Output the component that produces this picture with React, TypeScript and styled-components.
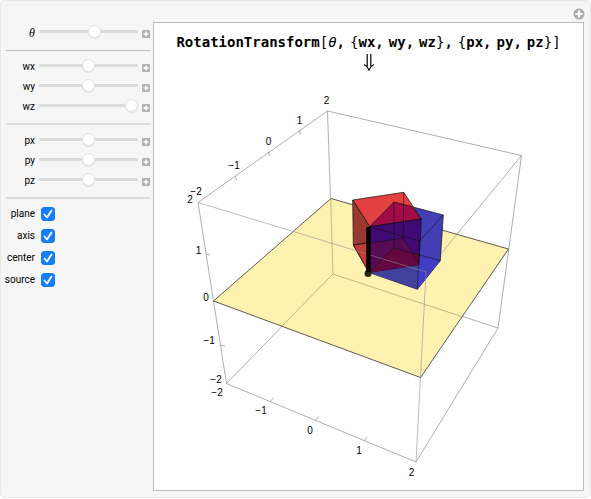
import React, { useState } from "react";
import styled, { createGlobalStyle } from "styled-components";

const GlobalStyle = createGlobalStyle`
  * { box-sizing: border-box; }
  body { margin: 0; background: #fff; }
`;

const Panel = styled.main`
  display: grid;
  grid-template-columns: 144px minmax(0, 1fr);
  column-gap: 3px;
  padding: 0 6px 6px 5px;
  border: 1px solid #e8e8e8;
  border-radius: 5px;
  background: #f6f6f6;
  color: #000;
  font: 400 10px/12px Roboto, sans-serif;
`;

const Header = styled.header`
  grid-column: 1 / -1;
  display: flex;
  justify-content: flex-end;
  height: 21px;
  padding-top: 7px;
`;

const MenuButton = styled.button`
  display: flex;
  width: 12px;
  height: 12px;
  margin-right: -1px;
  padding: 0;
  border: 0;
  background: none;
`;

const Controls = styled.form`
  display: flex;
  flex-direction: column;
  margin-top: -1px;
`;

const Group = styled.div`
  display: flex;
  flex-direction: column;
`;

const Divider = styled.hr<{ $soft?: boolean }>`
  width: 100%;
  height: ${(p) => (p.$soft ? 2 : 1)}px;
  margin: ${(p) => (p.$soft ? 8 : 9)}px 0 4px;
  border: 0;
  background: ${(p) => (p.$soft ? "#dcdcdc" : "#bcbcbc")};
`;

const SliderRow = styled.div`
  display: grid;
  grid-template-columns: 29px 99px 8px;
  column-gap: 4px;
  align-items: center;
  height: 20px;
`;

const Label = styled.label<{ $math?: boolean }>`
  padding-top: 4px;
  text-align: right;
  ${(p) => p.$math && 'font: italic 400 12px/12px "Liberation Serif", serif;'}
`;

const Slider = styled.input`
  appearance: none;
  width: 99px;
  height: 14px;
  margin: 0;
  background: none;
  &::-webkit-slider-runnable-track {
    height: 3px;
    border-radius: 2px;
    background: #dadada;
  }
  &::-webkit-slider-thumb {
    appearance: none;
    width: 13px;
    height: 13px;
    margin-top: -5px;
    border: 1px solid #e2e2e2;
    border-radius: 50%;
    background: #fff;
    box-shadow: 0 1px 1px rgba(0, 0, 0, 0.08);
  }
`;

const ExpandButton = styled.button`
  display: flex;
  width: 8px;
  height: 8px;
  margin-top: 5px;
  padding: 0;
  border: 0;
  background: none;
`;

const CheckRow = styled.div`
  display: grid;
  grid-template-columns: 29px 14px;
  column-gap: 6px;
  align-items: center;
  height: 22px;
`;

const CheckLabel = styled.label`
  display: flex;
  justify-content: flex-end;
`;

const CheckBox = styled.span`
  display: grid;
  > * { grid-area: 1 / 1; }
  svg { pointer-events: none; }
`;

const CheckInput = styled.input`
  appearance: none;
  width: 14px;
  height: 14px;
  margin: 0;
  border-radius: 3px;
  background: #fff;
  border: 1px solid #c4c4c4;
  &:checked { background: #147efb; border-color: #147efb; }
`;

const Display = styled.section`
  border: 1px solid #bdbdbd;
  background: #fff;
`;

const Title = styled.h1`
  display: flex;
  justify-content: center;
  gap: 5px;
  margin: 10px 0 0;
  font: 700 14px/18px "DejaVu Sans Mono", monospace;
  white-space: nowrap;
`;

const Light = styled.span`
  font-weight: 400;
`;

const Theta = styled.i`
  font-weight: 400;
`;

const ArrowRow = styled.div`
  display: flex;
  justify-content: center;
  height: 29px;
  padding-top: 2px;
`;

const Plot = styled.svg`
  display: block;
  width: 100%;
  height: auto;
  font: 400 10px "Liberation Sans", sans-serif;
  text-anchor: middle;
`;

const PlusSquare = () => (
  <svg viewBox="0 0 8 8" width="8" height="8" aria-hidden="true">
    <rect width="8" height="8" rx="1" fill="#b2b2b2" />
    <path d="M4 1.5v5M1.5 4h5" stroke="#fff" strokeWidth="1.5" />
  </svg>
);

type SliderSpec = { name: string; value: number; min: number; max: number };

const angle: SliderSpec[] = [{ name: "θ", value: 0.44, min: -3.14, max: 3.14 }];
const direction: SliderSpec[] = [
  { name: "wx", value: 0, min: -1, max: 1 },
  { name: "wy", value: 0, min: -1, max: 1 },
  { name: "wz", value: 1, min: -1, max: 1 },
];
const point: SliderSpec[] = [
  { name: "px", value: 0, min: -2, max: 2 },
  { name: "py", value: 0, min: -2, max: 2 },
  { name: "pz", value: 0, min: -2, max: 2 },
];
const options = ["plane", "axis", "center", "source"];

function SliderControl({ spec }: { spec: SliderSpec }) {
  const [value, setValue] = useState(spec.value);
  return (
    <SliderRow>
      <Label htmlFor={spec.name} $math={spec.name === "θ"}>{spec.name}</Label>
      <Slider
        id={spec.name}
        type="range"
        min={spec.min}
        max={spec.max}
        step={0.01}
        value={value}
        onChange={(e) => setValue(Number(e.target.value))}
      />
      <ExpandButton type="button" aria-label={`Expand ${spec.name}`}><PlusSquare /></ExpandButton>
    </SliderRow>
  );
}

function SliderGroup({ items }: { items: SliderSpec[] }) {
  return <Group>{items.map((s) => <SliderControl key={s.name} spec={s} />)}</Group>;
}

const ticks: [string, number, number][] = [
  ["2", 326.5, 104], ["1", 299.5, 124], ["0", 268.5, 145], ["−1", 234, 169], ["−2", 196, 195],
  ["2", 190, 203], ["1", 198.5, 254], ["0", 206, 301], ["−1", 209, 344], ["−2", 216, 383],
  ["−2", 217, 396], ["−1", 261, 414], ["0", 310, 434], ["1", 359, 454], ["2", 411.5, 476],
];

function RotationPlot() {
  return (
    <Plot viewBox="154 80 429 410" role="img" aria-label="Rotated cube and source cube">
      <g fill="none" stroke="#8c8c8c" strokeWidth="0.7">
        <path d="M327.5 111L198 202.5L226.5 383.5L416 462L498 328L521.5 155.5L327.5 111L333 274L226.5 383.5M333 274L498 328" />
        <path d="M521.5 155.5L426 272" />
      </g>
      <path d="M331 198.5L508.5 249L420.5 377.5L213.5 301Z" fill="#fff1b0" stroke="#333" strokeWidth="0.8" />
      <g fill="none" stroke="#8c8c6a" strokeWidth="0.7" opacity="0.8">
        <path d="M330.7 198.5L333 274L281 327M333 274L463 317M460 230.500L426 272" />
      </g>
      <g stroke="#111" strokeWidth="0.7" strokeLinejoin="round">
        <path d="M394 202L443.3 215L440.3 260.7L417.3 289.3L369 272.5L369.7 226.7Z" fill="#423eb4" />
        <path d="M369 272.5L419 264.7L417.3 289.3Z" fill="#41409c" stroke="none" />
        <path d="M419 254.5L440.3 260.7L417.3 289.3Z" fill="#403cc6" stroke="none" />
        <path d="M352.7 200L403.7 192.3L421.3 219L369.7 226.7Z" fill="#e14141" />
        <path d="M352.7 200L369.7 226.7L369 272.5L353.3 245Z" fill="#9a392f" />
        <path d="M353.3 245L369 242.5V272.5Z" fill="#c43a37" />
        <path d="M369.7 226.7L394 202L411.5 206.5L421.3 219Z" fill="#a00b48" />
        <path d="M369.7 226.7L421.3 219L419 264.7L369 272.5Z" fill="#400a72" />
        <path d="M369 243L403.3 238.3L419.3 263L369 272.5Z" fill="#580b55" stroke="none" />
        <path d="M369 272.5L394 248L419 254.5V264.7Z" fill="#650842" stroke="none" />
        <path d="M369.7 226.7L419.5 241L443.3 215M419.5 241L417.3 289.3M394 202V248L440.3 260.7M394 248L369 272.5M403.7 192.3L403.3 238.3L419 264.7M353.3 245L403.3 238.3" fill="none" strokeOpacity="0.8" />
      </g>
      <path d="M198 202.5L426 272L416 462" fill="none" stroke="#8c8c8c" strokeWidth="0.7" strokeOpacity="0.8" />
      <circle cx="368" cy="273.5" r="3.5" fill="#26260c" />
      <path d="M368.5 227V272" stroke="#000" strokeWidth="4.5" />
      <path
        d="M299.5 130.500l1 4M268.500 152l1 4M235.500 176l1 4M206 254l4 1M220 345l5 1M270.500 401.500l3-4M315.500 420.500l3-4M364 441l3-4"
        fill="none" stroke="#8c8c8c" strokeWidth="0.7"
      />
      {ticks.map(([text, x, y], i) => <text key={i} x={x} y={y}>{text}</text>)}
    </Plot>
  );
}

export default function App() {
  return (
    <>
      <GlobalStyle />
      <Panel>
        <Header>
          <MenuButton type="button" aria-label="Options">
            <svg viewBox="0 0 12 12" width="12" height="12" aria-hidden="true">
              <circle cx="6" cy="6" r="5.5" fill="#adadad" />
              <path d="M6 2.500v7M2.500 6h7" stroke="#fff" strokeWidth="2" />
            </svg>
          </MenuButton>
        </Header>
        <Controls>
          <SliderGroup items={angle} />
          <Divider />
          <SliderGroup items={direction} />
          <Divider $soft />
          <SliderGroup items={point} />
          <Divider $soft />
          <Group>
            {options.map((name) => (
              <CheckRow key={name}>
                <CheckLabel htmlFor={name}>{name}</CheckLabel>
                <CheckBox>
                  <CheckInput id={name} type="checkbox" defaultChecked />
                  <svg viewBox="0 0 14 14" width="14" height="14" aria-hidden="true">
                    <path d="M3.500 7.500L6 10.500L10.500 3.500" fill="none" stroke="#fff" strokeWidth="1.8" strokeLinecap="round" strokeLinejoin="round" />
                  </svg>
                </CheckBox>
              </CheckRow>
            ))}
          </Group>
        </Controls>
        <Display>
          <Title>
            <span>RotationTransform<Light>[</Light><Theta>θ</Theta>,</span>
            <span><Light>{"{"}</Light>wx,</span>
            <span>wy,</span>
            <span>wz<Light>{"}"}</Light>,</span>
            <span><Light>{"{"}</Light>px,</span>
            <span>py,</span>
            <span>pz<Light>{"}]"}</Light></span>
          </Title>
          <ArrowRow>
            <svg viewBox="0 0 12 18" width="12" height="18" aria-hidden="true">
              <path d="M4.200 1v12.500M7.800 1v12.500M1 11.500Q4.500 13 6 17Q7.500 13 11 11.500" fill="none" stroke="#000" strokeWidth="1.200" />
            </svg>
          </ArrowRow>
          <RotationPlot />
        </Display>
      </Panel>
    </>
  );
}
